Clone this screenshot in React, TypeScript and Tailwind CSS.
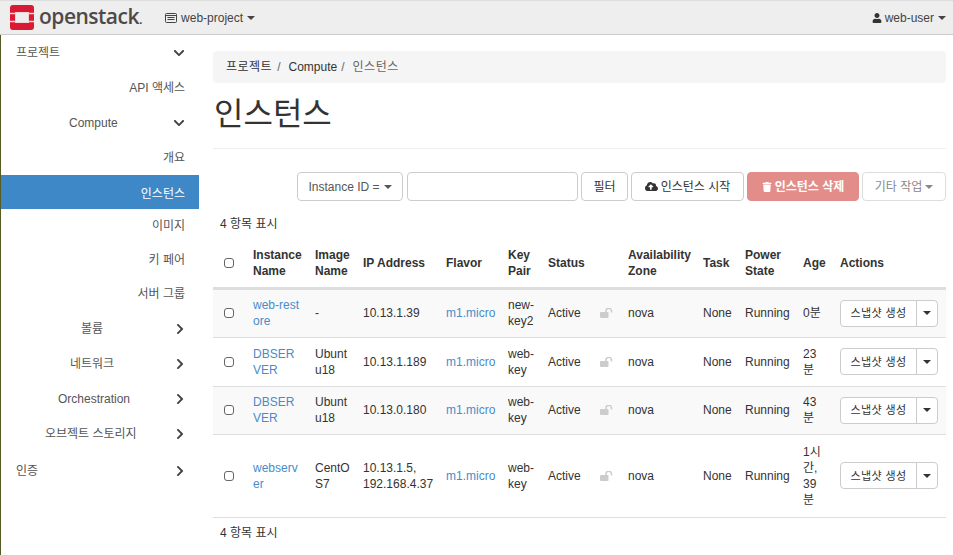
import React from 'react';
import { FaUser, FaChevronDown, FaChevronRight, FaCloudUploadAlt, FaTrash } from 'react-icons/fa';

const font = "font-['Liberation_Sans','Noto_Sans_CJK_KR',sans-serif]";

const Caret = ({ className = '' }: { className?: string }) => (
  <span className={`inline-block h-0 w-0 border-x-[4px] border-t-[4px] border-x-transparent border-t-current ${className}`} />
);

const rows = [
  { name: ['web-rest', 'ore'], image: ['-'], ip: ['10.13.1.39'], key: ['new-', 'key2'], age: ['0분'], h: 'h-[49px]', bg: 'bg-[#f9f9f9]' },
  { name: ['DBSER', 'VER'], image: ['Ubunt', 'u18'], ip: ['10.13.1.189'], key: ['web-', 'key'], age: ['23', '분'], h: 'h-[49px]', bg: 'bg-white' },
  { name: ['DBSER', 'VER'], image: ['Ubunt', 'u18'], ip: ['10.13.0.180'], key: ['web-', 'key'], age: ['43', '분'], h: 'h-[48px]', bg: 'bg-[#f9f9f9]' },
  { name: ['webserv', 'er'], image: ['CentO', 'S7'], ip: ['10.13.1.5,', '192.168.4.37'], key: ['web-', 'key'], age: ['1시', '간,', '39', '분'], h: 'h-[83px]', bg: 'bg-white' },
];

const Lines = ({ lines }: { lines: string[] }) => (
  <>
    {lines.map((l, i) => (
      <div key={i}>{l}</div>
    ))}
  </>
);

const Check = () => <span className="block h-[10px] w-[10px] rounded-[3px] border border-[#666] bg-white" />;

const OpenLock = () => (
  <svg width="13" height="10" viewBox="0 0 13 10" className="block">
    <rect x="0" y="4" width="8.5" height="6" rx="1" fill="#ccc" />
    <path d="M6 4.5V3a2.5 2.5 0 0 1 5.5 0v1.5" fill="none" stroke="#ccc" strokeWidth="1.5" />
  </svg>
);

type SideItem = { label: string; h: string; align: string; chevron?: 'down' | 'right'; active?: boolean };

const side: SideItem[] = [
  { label: '프로젝트', h: 'h-[35px]', align: 'pl-[15px]', chevron: 'down' },
  { label: 'API 액세스', h: 'h-[35px]', align: 'justify-end pr-[14px]' },
  { label: 'Compute', h: 'h-[34px] pt-[2px]', align: 'pl-[68px]', chevron: 'down' },
  { label: '개요', h: 'h-[36px] pt-[2px]', align: 'justify-end pr-[14px]' },
  { label: '인스턴스', h: 'h-[34px] pt-[3px]', align: 'justify-end pr-[14px]', active: true },
  { label: '이미지', h: 'h-[33px]', align: 'justify-end pr-[14px]' },
  { label: '키 페어', h: 'h-[34px] pt-[2px]', align: 'justify-end pr-[14px]' },
  { label: '서버 그룹', h: 'h-[34px] pt-[2px]', align: 'justify-end pr-[14px]' },
  { label: '볼륨', h: 'h-[35px] pt-[2px]', align: 'pl-[80px]', chevron: 'right' },
  { label: '네트워크', h: 'h-[36px] pt-[2px]', align: 'pl-[69px]', chevron: 'right' },
  { label: 'Orchestration', h: 'h-[35px]', align: 'pl-[57px]', chevron: 'right' },
  { label: '오브젝트 스토리지', h: 'h-[35px]', align: 'pl-[44px]', chevron: 'right' },
  { label: '인증', h: 'h-[36px] pt-[3px]', align: 'pl-[15px]', chevron: 'right' },
];

export default function App() {
  return (
    <div className={`${font} h-[555px] w-[953px] overflow-hidden bg-white text-[12px] leading-[16px] text-[#333]`}>
      <header className="flex h-[35px] items-center justify-between border-y border-t-[#ddd] border-b-[#ccc] bg-[#eee] pl-[10px] pr-[7px]">
        <div className="flex items-center">
          <svg width="24" height="25" viewBox="0 0 24 25">
            <rect width="24" height="25" rx="3" fill="#da1a32" />
            <rect x="5" y="7" width="14" height="11" fill="#f1d5d8" />
            <rect x="6" y="8" width="12" height="9" fill="#eee" />
            <path d="M0 8.5h5M0 16.5h5M19 8.5h5M19 16.5h5" stroke="#f1d5d8" strokeWidth="1.5" />
          </svg>
          <span className="ml-[5px] font-['Open_Sans',sans-serif] text-[21px] leading-[25px] tracking-[-0.5px] font-semibold text-[#4e4a48]">
            openstack<span className="text-[13px]">.</span>
          </span>
          <div className="ml-[23px] flex items-center text-[#444]">
            <svg width="12" height="10" viewBox="0 0 12 10">
              <rect x="0.5" y="0.5" width="11" height="9" rx="1" fill="none" stroke="#444" />
              <path d="M0 2.5h12M2.5 4.5h7M2.5 6.5h7" stroke="#444" />
            </svg>
            <span className="ml-[4px]">web-project</span>
            <Caret className="ml-[4px]" />
          </div>
        </div>
        <div className="flex items-center text-[#444]">
          <FaUser className="h-[10px] w-[10px] text-[#333]" />
          <span className="ml-[3px]">web-user</span>
          <Caret className="ml-[4px]" />
        </div>
      </header>

      <div className="flex">
        <aside className="h-[520px] w-[199px] shrink-0 border-l border-l-[#555b26]">
          {side.map((s) => (
            <div
              key={s.label}
              className={`relative flex items-center ${s.h} ${s.align} ${s.active ? 'bg-[#3f88c8] text-white' : 'text-[#555]'}`}
            >
              {s.label}
              {s.chevron === 'down' && <FaChevronDown className="absolute right-[14px] h-[12px] w-[12px] text-[#444]" />}
              {s.chevron === 'right' && <FaChevronRight className="absolute right-[13px] h-[12px] w-[12px] text-[#444]" />}
            </div>
          ))}
        </aside>

        <main className="w-[747px] pl-[14px]">
          <div className="mt-[16px] flex h-[32px] w-[733px] items-center rounded-[4px] bg-[#f5f5f5] pl-[13px]">
            <span className="tracking-[0.5px] text-[#333]">프로젝트</span>
            <span className="ml-[5px] text-[#666]">/</span>
            <span className="ml-[8px]">Compute</span>
            <span className="ml-[4px] text-[#666]">/</span>
            <span className="ml-[8px] tracking-[0.5px] text-[#666]">인스턴스</span>
          </div>
          <div className="h-[66px] border-b border-[#eee]">
            <h1 className="pt-[11px] pl-[1px] text-[32px] leading-[40px] font-normal text-[#333]">인스턴스</h1>
          </div>

          <div className="mt-[23px] flex h-[30px] justify-end gap-[3px]">
            <button className="flex h-[29px] w-[106px] items-center justify-center rounded-[4px] border border-[#ccc] text-[#555]">
              Instance ID =<Caret className="ml-[4px]" />
            </button>
            <div className="ml-[1px] h-[29px] w-[171px] rounded-[4px] border border-[#ccc]" />
            <button className="flex h-[29px] w-[47px] items-center justify-center rounded-[4px] border border-[#ccc]">필터</button>
            <button className="flex h-[29px] w-[113px] items-center justify-center rounded-[4px] border border-[#ccc]">
              <FaCloudUploadAlt className="mr-[3px] h-[13px] w-[13px]" />
              인스턴스 시작
            </button>
            <button className="flex h-[29px] w-[112px] items-center justify-center rounded-[4px] border border-[#e38d8a] bg-[#e38d8a] font-bold text-white">
              <FaTrash className="mr-[3px] h-[10px] w-[10px]" />
              인스턴스 삭제
            </button>
            <button className="flex h-[29px] w-[84px] items-center justify-center rounded-[4px] border border-[#ddd] text-[#888]">
              기타 작업<Caret className="ml-[3px]" />
            </button>
          </div>

          <div className="mt-[12px] flex h-[20px] items-center pl-[7px]">4 항목 표시</div>

          <table className="mt-[6px] w-[733px] table-fixed border-collapse">
            <colgroup>
              <col className="w-[32px]" />
              <col className="w-[62px]" />
              <col className="w-[48px]" />
              <col className="w-[83px]" />
              <col className="w-[62px]" />
              <col className="w-[40px]" />
              <col className="w-[50px]" />
              <col className="w-[30px]" />
              <col className="w-[75px]" />
              <col className="w-[42px]" />
              <col className="w-[58px]" />
              <col className="w-[37px]" />
              <col className="w-[114px]" />
            </colgroup>
            <thead>
              <tr className="h-[48px] border-b-[3px] border-[#ddd] text-left font-bold">
                <th className="pl-[11px]"><Check /></th>
                <th className="pl-[8px]">Instance<br />Name</th>
                <th className="pl-[8px]">Image<br />Name</th>
                <th className="pl-[8px]">IP Address</th>
                <th className="pl-[8px]">Flavor</th>
                <th className="pl-[8px]">Key<br />Pair</th>
                <th className="pl-[8px]">Status</th>
                <th />
                <th className="pl-[8px]">Availability<br />Zone</th>
                <th className="pl-[8px]">Task</th>
                <th className="pl-[8px]">Power<br />State</th>
                <th className="pl-[8px]">Age</th>
                <th className="pl-[8px]">Actions</th>
              </tr>
            </thead>
            <tbody>
              {rows.map((r, i) => (
                <tr key={i} className={`${r.h} ${r.bg} border-b border-[#ddd]`}>
                  <td className="pl-[11px]"><Check /></td>
                  <td className="pl-[8px] text-[#4a8bc9]"><Lines lines={r.name} /></td>
                  <td className="pl-[8px]"><Lines lines={r.image} /></td>
                  <td className="pl-[8px]"><Lines lines={r.ip} /></td>
                  <td className="pl-[8px] text-[#4a8bc9]">m1.micro</td>
                  <td className="pl-[8px]"><Lines lines={r.key} /></td>
                  <td className="pl-[8px]">Active</td>
                  <td className="pl-[10px]"><OpenLock /></td>
                  <td className="pl-[8px]">nova</td>
                  <td className="pl-[8px]">None</td>
                  <td className="pl-[8px]">Running</td>
                  <td className="pl-[8px]"><Lines lines={r.age} /></td>
                  <td className="pl-[8px]">
                    <div className="flex h-[27px] w-[98px] rounded-[4px] border border-[#ccc] bg-white">
                      <span className="flex flex-1 items-center justify-center text-[11px] tracking-[0.4px]">스냅샷 생성</span>
                      <span className="flex w-[21px] items-center justify-center border-l border-[#ccc]"><Caret /></span>
                    </div>
                  </td>
                </tr>
              ))}
            </tbody>
          </table>

          <div className="mt-[5px] flex h-[20px] items-center pl-[7px]">4 항목 표시</div>
        </main>
      </div>
    </div>
  );
}
